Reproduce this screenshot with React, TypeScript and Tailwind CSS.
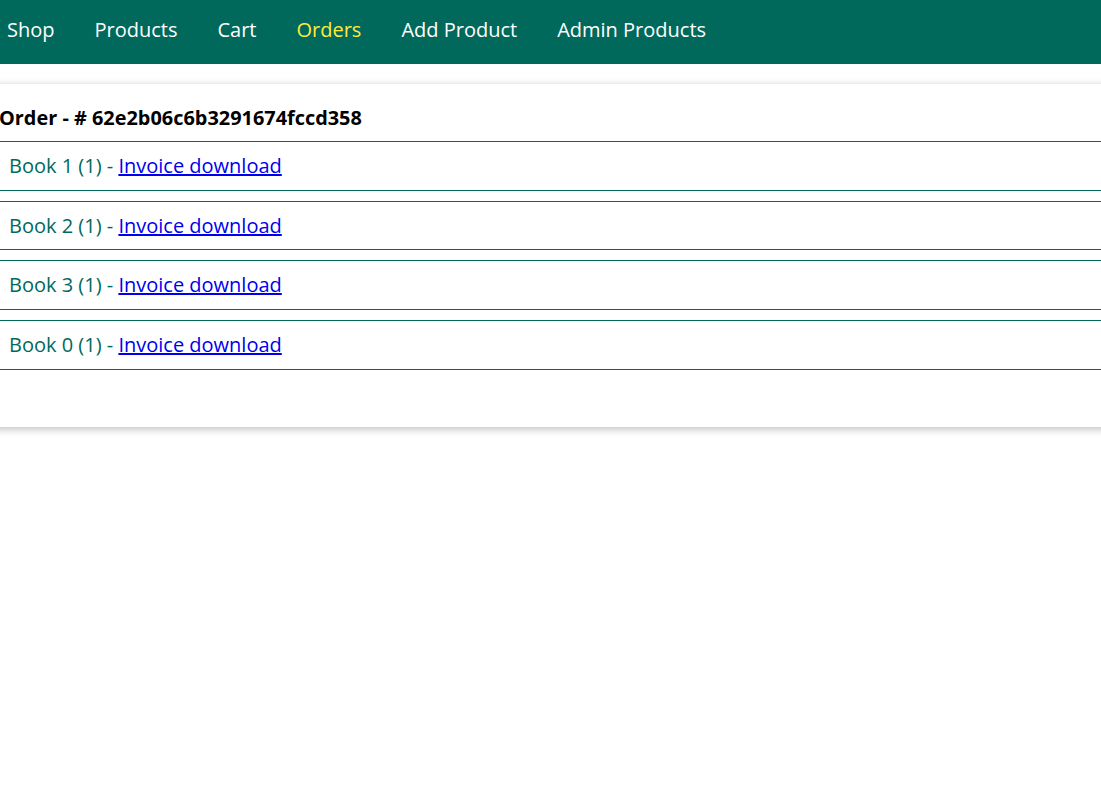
import React from 'react';

const NAV_ITEMS = [
  { label: 'Shop', active: false },
  { label: 'Products', active: false },
  { label: 'Cart', active: false },
  { label: 'Orders', active: true },
  { label: 'Add Product', active: false },
  { label: 'Admin Products', active: false },
];

const ORDER = {
  id: '62e2b06c6b3291674fccd358',
  products: [
    { title: 'Book 1', quantity: 1 },
    { title: 'Book 2', quantity: 1 },
    { title: 'Book 3', quantity: 1 },
    { title: 'Book 0', quantity: 1 },
  ],
};

const App: React.FC = () => {
  return (
    <div className="min-h-[793px] bg-white overflow-hidden" style={{ fontFamily: '"Open Sans", "Noto Sans", sans-serif' }}>
      {/* Main header */}
      <header className="h-16 w-full bg-[#00695c] flex items-center pb-[6px]">
        <nav className="flex items-center gap-10 pl-[7px] text-[20px] leading-[27px]">
          {NAV_ITEMS.map((item) => (
            <a key={item.label} href="#" className={item.active ? 'text-[#ffeb3b]' : 'text-white'}>
              {item.label}
            </a>
          ))}
        </nav>
      </header>

      {/* Orders */}
      <main className="pt-5">
        <ul className="list-none m-0 p-0">
          <li className="-ml-[21px] w-[calc(100%+42px)] bg-white px-5 pt-5 pb-[57px] shadow-[0_2px_8px_rgba(0,0,0,0.26)]">
            <h1 className="m-0 text-[19.9px] leading-[27px] font-bold text-black">Order - # {ORDER.id}</h1>
            <ul className="list-none m-0 mt-[10px] p-0 flex flex-col gap-[10.2px]">
              {ORDER.products.map((p) => (
                <li key={p.title} className="border border-[#00695c] py-[10px] px-[9px] text-[20px] leading-[27.5px] text-[#00695c]">
                  {p.title} ({p.quantity}) -{' '}
                  <a href="#" className="text-[#0000ee] underline">Invoice download</a>
                </li>
              ))}
            </ul>
          </li>
        </ul>
      </main>
    </div>
  );
};

export default App;
